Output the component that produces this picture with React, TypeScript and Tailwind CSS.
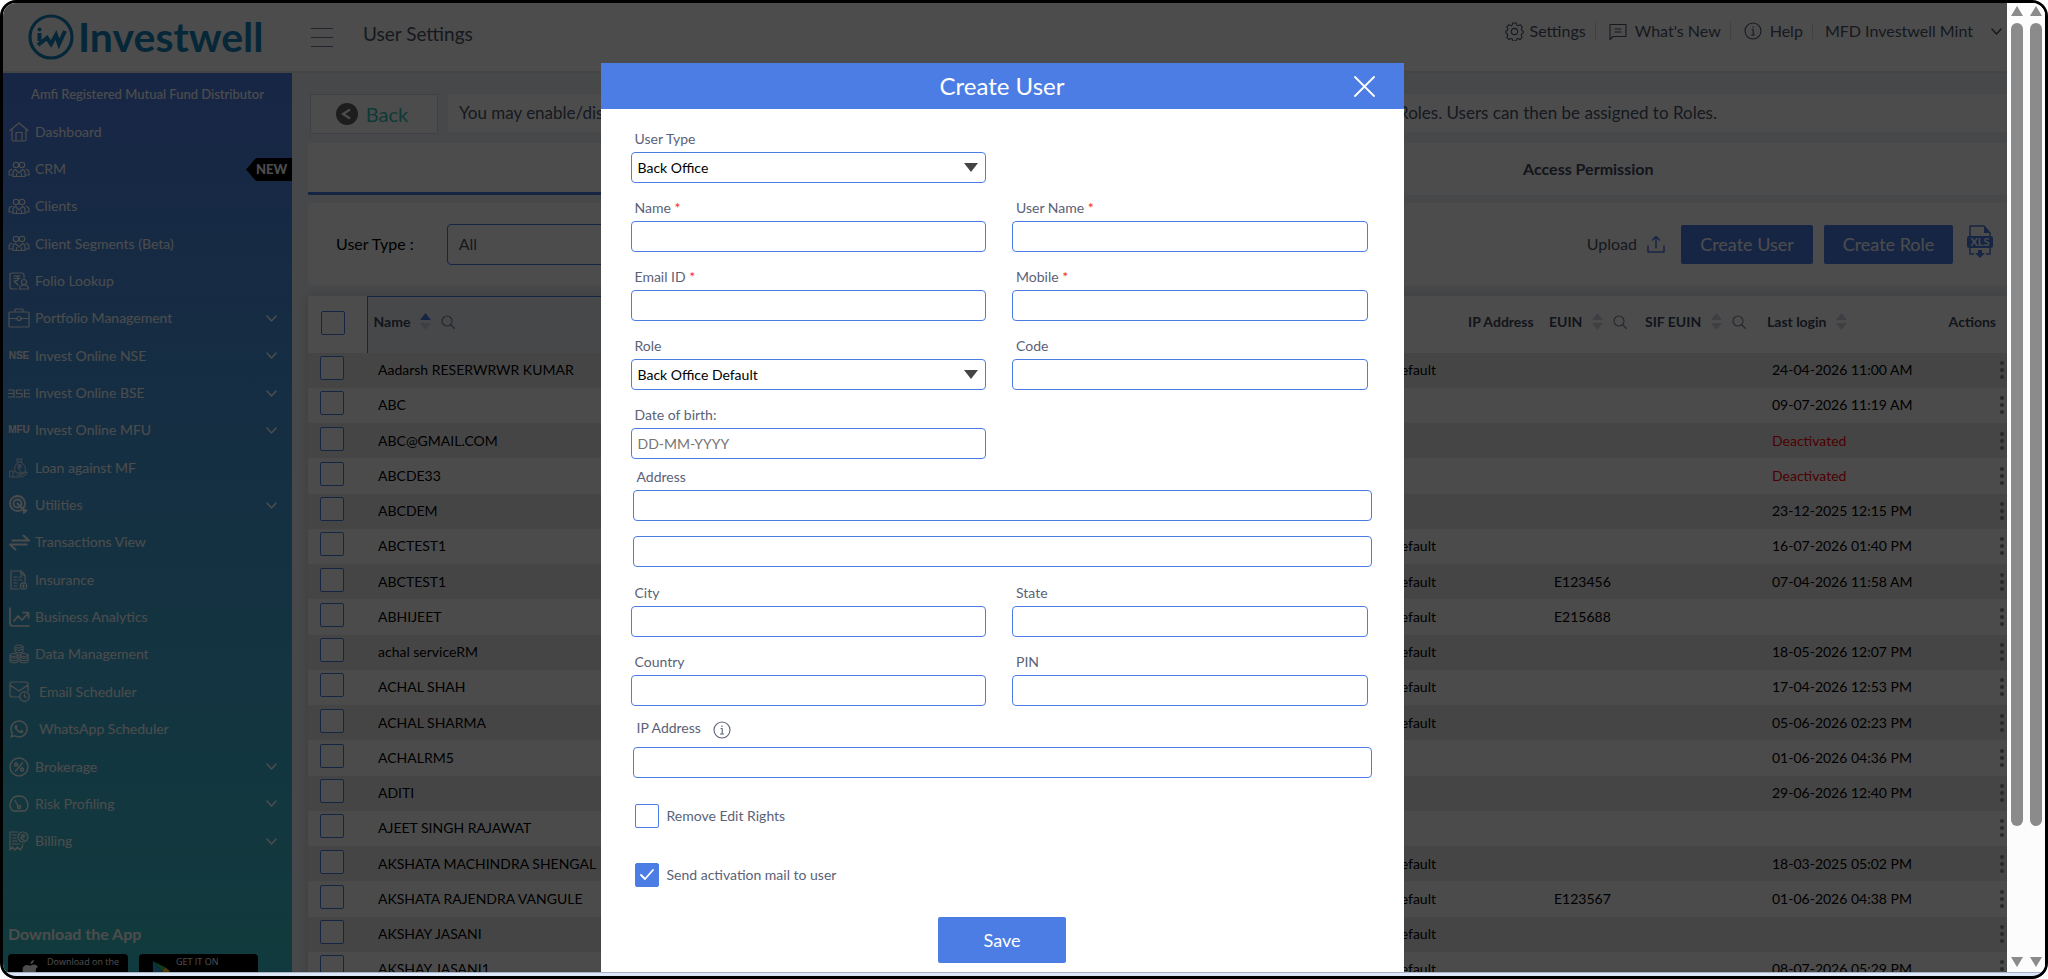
import { useState } from 'react';
import type { ReactNode } from 'react';
import { FaWhatsapp } from 'react-icons/fa';

type MenuItem = { label: string; icon: ReactNode; expandable?: boolean; isNew?: boolean; indent?: boolean };
type UserRow = { name: string; role?: string; euin?: string; login?: string };

const line = {
    fill: 'none',
    stroke: 'currentColor',
    strokeWidth: 1.2,
    strokeLinecap: 'round',
    strokeLinejoin: 'round',
} as const;

/* ---------- sidebar icons ---------- */

const HomeIcon = () => (
    <svg viewBox='0 0 20 20' className='w-5 h-5' {...line}>
        <path d='M1 8.500 10 1l9 7.500M3 7v10.500q0 1.500 1.500 1.500h11q1.500 0 1.500-1.500V7M7 19v-8.500h6V19' />
    </svg>
);

const PeopleIcon = () => (
    <svg viewBox='0 0 22 17' className='w-[22px] h-[17px]' {...line} strokeWidth={1.1}>
        <circle cx='8' cy='4' r='2.700' />
        <circle cx='14' cy='4' r='2.700' />
        <path d='M5 15.500V12q0-3 2.500-3.500L11 12l3.500-3.500Q17 9 17 12v3.500zM5 14H1v-2.500q0-2.500 3-3.200M17 14h4v-2.500q0-2.500-3-3.200M8.500 12.500v3M13.500 12.500v3' />
    </svg>
);

const FolioIcon = () => (
    <svg viewBox='0 0 20 18' className='w-5 h-[18px]' {...line}>
        <path d='M8 17H3q-2 0-2-2V3q0-2 2-2h10q2 0 2 2v3' />
        <path d='M5 4h6M5 6.500h6M5 4q4.500 0 4.500 2.500T5 9l4 4' />
        <circle cx='15' cy='10' r='2.500' />
        <path d='M10.500 17q0-4 4.500-4t4.500 4z' />
    </svg>
);

const BriefcaseIcon = () => (
    <svg viewBox='0 0 22 20' className='w-[22px] h-5' {...line}>
        <path d='M2 4h18q1 0 1 1v13q0 1-1 1H2q-1 0-1-1V5q0-1 1-1zM7 4V2q0-1 1-1h6q1 0 1 1v2M1 10.500h8M13 10.500h8' />
        <circle cx='11' cy='10.500' r='2' />
    </svg>
);

const WordIcon = ({ text }: { text: string }) => (
    <span className='text-[10px] leading-3 font-bold font-["Liberation_Sans",sans-serif]'>{text}</span>
);

const BseIcon = () => (
    <svg viewBox='0 0 22 9' className='w-[22px] h-[9px]' {...line}>
        <path d='M0 1h6v7H0M0 4.500h6M14 1H8.500v3.500H14V8H8M22 1h-5.500v7H22M16.500 4.500H22' />
    </svg>
);

const LoanIcon = () => (
    <svg viewBox='0 0 20 20' className='w-5 h-5 opacity-80' {...line} strokeWidth={1}>
        <path d='M8 1h5l-1 3H9zM9 4q-5 5-3 9M12 4q6 4 4 10-2 1-5 0M8.500 7h4M8.500 9h4M9 7q3 0 2.500 2T9 11l2.500 2M1 13h3v6H1zM4 14q3-1 5 1h3q1 1-1 2H8M12 17l5-3q2 0 1 1.500Q14 20 9 19H4' />
    </svg>
);

const UtilitiesIcon = () => (
    <svg viewBox='0 0 20 20' className='w-5 h-5' {...line} strokeWidth={1.8}>
        <circle cx='8.500' cy='8.500' r='7.500' />
        <circle cx='8.500' cy='8.500' r='4' />
        <path d='m8.500 8.500 8 8' />
        <path d='m13 13 6 2-4.500 4.500z' fill='currentColor' stroke='none' />
    </svg>
);

const TransferIcon = () => (
    <svg viewBox='0 0 21 17' className='w-[21px] h-[17px]' {...line} strokeWidth={2}>
        <path d='M3.500 6.500H20l-5.500-5M17.500 10.500H1l5.500 5' />
    </svg>
);

const InsuranceIcon = () => (
    <svg viewBox='0 0 18 20' className='w-[18px] h-5' {...line}>
        <path d='M9 19H1V1h10l4 4v7M11 1v4h4M4 7h3M9 7h3M4 10h3M9 10h3M4 13h3M4 16h3' />
        <circle cx='13.500' cy='16' r='3.200' />
        <path d='M13.500 14.500v3M12 16h3' />
    </svg>
);

const AnalyticsIcon = () => (
    <svg viewBox='0 0 21 20' className='w-[21px] h-5' {...line} strokeWidth={1.7}>
        <path d='M1 1v15q0 3 3 3h16M5 14l4-5 4 4 6-6.500M14 5.500h5.500V11' />
    </svg>
);

const DataIcon = () => (
    <svg viewBox='0 0 20 20' className='w-5 h-5' {...line} strokeWidth={1}>
        <path d='M6 3v5q4 2 8 0V3M6 5.500q4 2 8 0M1 11v7q4 2 8 0v-7M1 13.500q4 2 8 0M1 16q4 2 8 0M11 11v7q4 2 8 0v-7M11 13.500q4 2 8 0M11 16q4 2 8 0' />
        <ellipse cx='10' cy='2.500' rx='4' ry='1.500' />
        <ellipse cx='5' cy='11' rx='4' ry='1.500' />
        <ellipse cx='15' cy='11' rx='4' ry='1.500' />
    </svg>
);

const EmailIcon = () => (
    <svg viewBox='0 0 21 21' className='w-[21px] h-[21px]' {...line}>
        <path d='M10 16H3q-2 0-2-2V3q0-2 2-2h14q2 0 2 2v7M1 4l9 6 9-6' />
        <circle cx='15.500' cy='15.500' r='4.800' />
        <path d='M15.500 13v3h2' />
    </svg>
);

const PercentIcon = () => (
    <svg viewBox='0 0 20 20' className='w-5 h-5' {...line} strokeWidth={1.4}>
        <circle cx='10' cy='10' r='9' />
        <path d='m6.500 14 7-8' />
        <circle cx='7' cy='7.500' r='1.500' />
        <circle cx='13' cy='12.500' r='1.500' />
    </svg>
);

const GaugeIcon = () => (
    <svg viewBox='0 0 20 17' className='w-5 h-[17px]' {...line} strokeWidth={1.4}>
        <path d='M4 16q-3-2-3-6 1-9 9-9t9 9q0 4-3 6zM9 11 6 5.500' />
        <circle cx='10' cy='12' r='1.500' />
    </svg>
);

const BillingIcon = () => (
    <svg viewBox='0 0 20 20' className='w-5 h-5' {...line}>
        <path d='M9 1H1v18l2.500-3L6 19l2.500-3 2.500 3 2.500-3V13M3.500 4H7M3.500 7H7M3.500 10H8M3.500 13h7' />
        <circle cx='14' cy='6' r='5' />
        <path d='M12 4h4M12 6h4M12 4q3 0 3 1t-3 2l3 2.500' />
    </svg>
);

const ChevronDown = ({ className = 'w-[11px] h-[7px]' }: { className?: string }) => (
    <svg viewBox='0 0 11 7' className={className} {...line} strokeWidth={1.5}>
        <path d='m1 1 4.500 5L10 1' />
    </svg>
);

/* ---------- page icons ---------- */

const InfoIcon = () => (
    <svg viewBox='0 0 18 18' className='w-[18px] h-[18px]' {...line} strokeWidth={1.1}>
        <circle cx='9' cy='9' r='8' />
        <path d='M8 7.500h1.200V13M7.500 13h3M9 4.800v.6' />
    </svg>
);

const GearIcon = () => (
    <svg viewBox='0 0 20 20' className='w-[19px] h-[19px]' {...line} strokeWidth={1.1}>
        <path d='M8.200 1h3.600l.6 2.300 1.500.7 2.100-1.200 2.300 2.600-1.200 2 .6 1.600 1.500.5v2.200l-1.600.7-.6 1.500 1.100 2.100-2.300 2.500-2-1.100-1.500.6-.6 2H8.300l-.6-2-1.600-.6-2 1.100-2.300-2.500L3 13.900l-.6-1.500-1.500-.7V9.500l1.500-.5L3 7.400l-1.200-2L4.100 2.800 6.200 4l1.400-.7z' />
        <circle cx='10' cy='10' r='3.300' />
    </svg>
);

const NewsIcon = () => (
    <svg viewBox='0 0 18 18' className='w-[18px] h-[18px]' {...line} strokeWidth={1.1}>
        <path d='M1 2.500h16v12H4l-3 3zM6 7h6M6 10h6' />
    </svg>
);

const UploadIcon = () => (
    <svg viewBox='0 0 18 18' className='w-[18px] h-[18px] text-[#4c7de5]' {...line} strokeWidth={1.5}>
        <path d='M1 11v6h16v-6M9 13V1.500M5.500 5 9 1.500 12.500 5' />
    </svg>
);

const XlsIcon = () => (
    <svg viewBox='0 0 26 33' className='w-[26px] h-[33px] text-[#4c7de5]'>
        <path d='M3 12V1h14l6 7v4M3 22v7h4M23 22v7h-4' fill='none' stroke='currentColor' strokeWidth='1.5' />
        <path d='M17 1v7h6z' fill='currentColor' />
        <rect x='0' y='11' width='26' height='12' rx='2' fill='currentColor' />
        <path d='M11 25h4v3h3l-5 5-5-5h3z' fill='currentColor' />
        <text x='13' y='21' textAnchor='middle' fontSize='11' fontWeight='700' fill='#fff'>XLS</text>
    </svg>
);

const SearchIcon = () => (
    <svg viewBox='0 0 14 14' className='w-[14px] h-[14px] text-[#7b879b]' {...line}>
        <circle cx='6' cy='6' r='5' />
        <path d='m9.500 9.500 4 4' />
    </svg>
);

const SortIcon = ({ active = false }: { active?: boolean }) => (
    <svg viewBox='0 0 11 17' className='w-[11px] h-[17px]'>
        <path d='m5.500 0 5.500 7H0z' fill={active ? '#4c7de5' : '#ccd3e0'} />
        <path d='m5.500 17 5.500-7H0z' fill='#ccd3e0' />
    </svg>
);

const Logo = () => (
    <a href='#' className='flex items-center gap-1 pl-[25px] w-[289px] text-[#1583bd]'>
        <svg viewBox='0 0 46 46' className='w-[46px] h-[46px] shrink-0' fill='none' stroke='currentColor'>
            <circle cx='23' cy='23' r='21' strokeWidth='3.200' />
            <circle cx='11.500' cy='15.500' r='2' fill='currentColor' stroke='none' />
            <path d='M11.500 19v8' strokeWidth='4' />
            <path d='m10 31 9-7 4 6 5-9 3 9 6-13' strokeWidth='4' />
        </svg>
        <span className='text-[41px] leading-10 font-bold'>Investwell</span>
    </a>
);

const menu: MenuItem[] = [
    { label: 'Dashboard', icon: <HomeIcon /> },
    { label: 'CRM', icon: <PeopleIcon />, isNew: true },
    { label: 'Clients', icon: <PeopleIcon /> },
    { label: 'Client Segments (Beta)', icon: <PeopleIcon /> },
    { label: 'Folio Lookup', icon: <FolioIcon /> },
    { label: 'Portfolio Management', icon: <BriefcaseIcon />, expandable: true },
    { label: 'Invest Online NSE', icon: <WordIcon text='NSE' />, expandable: true },
    { label: 'Invest Online BSE', icon: <BseIcon />, expandable: true },
    { label: 'Invest Online MFU', icon: <WordIcon text='MFU' />, expandable: true },
    { label: 'Loan against MF', icon: <LoanIcon /> },
    { label: 'Utilities', icon: <UtilitiesIcon />, expandable: true },
    { label: 'Transactions View', icon: <TransferIcon /> },
    { label: 'Insurance', icon: <InsuranceIcon /> },
    { label: 'Business Analytics', icon: <AnalyticsIcon /> },
    { label: 'Data Management', icon: <DataIcon /> },
    { label: 'Email Scheduler', icon: <EmailIcon />, indent: true },
    { label: 'WhatsApp Scheduler', icon: <FaWhatsapp className='w-5 h-5' />, indent: true },
    { label: 'Brokerage', icon: <PercentIcon />, expandable: true },
    { label: 'Risk Profiling', icon: <GaugeIcon />, expandable: true },
    { label: 'Billing', icon: <BillingIcon />, expandable: true },
];

const users: UserRow[] = [
    { name: 'Aadarsh RESERWRWR KUMAR', role: 'Default', login: '24-04-2026 11:00 AM' },
    { name: 'ABC', login: '09-07-2026 11:19 AM' },
    { name: 'ABC@GMAIL.COM', login: 'Deactivated' },
    { name: 'ABCDE33', login: 'Deactivated' },
    { name: 'ABCDEM', login: '23-12-2025 12:15 PM' },
    { name: 'ABCTEST1', role: 'Default', login: '16-07-2026 01:40 PM' },
    { name: 'ABCTEST1', role: 'Default', euin: 'E123456', login: '07-04-2026 11:58 AM' },
    { name: 'ABHIJEET', role: 'Default', euin: 'E215688' },
    { name: 'achal serviceRM', role: 'Default', login: '18-05-2026 12:07 PM' },
    { name: 'ACHAL SHAH', role: 'Default', login: '17-04-2026 12:53 PM' },
    { name: 'ACHAL SHARMA', role: 'Default', login: '05-06-2026 02:23 PM' },
    { name: 'ACHALRM5', login: '01-06-2026 04:36 PM' },
    { name: 'ADITI', login: '29-06-2026 12:40 PM' },
    { name: 'AJEET SINGH RAJAWAT' },
    { name: 'AKSHATA MACHINDRA SHENGAL', role: 'Default', login: '18-03-2025 05:02 PM' },
    { name: 'AKSHATA RAJENDRA VANGULE', role: 'Default', euin: 'E123567', login: '01-06-2026 04:38 PM' },
    { name: 'AKSHAY JASANI', role: 'Default' },
    { name: 'AKSHAY JASANI1', role: 'Default', login: '08-07-2026 05:29 PM' },
];

const boxClass = 'block appearance-none w-6 h-6 rounded-[2px] border border-[#4c7de5] bg-white';

function Header() {
    return (
        <header className='flex items-center h-[70px] shrink-0 bg-white border-b-2 border-[#e2e7ef] text-[#4a5468]'>
            <Logo />
            <button aria-label='Toggle menu' className='ml-[19px] flex flex-col gap-2 w-[22px]'>
                <span className='h-px bg-[#6b7890]' />
                <span className='h-px bg-[#6b7890]' />
                <span className='h-px bg-[#6b7890]' />
            </button>
            <h1 className='ml-[30px] text-[19px] pb-[6px]'>User Settings</h1>
            <nav className='ml-auto pb-3 flex items-center text-base'>
                <a href='#' className='flex items-center gap-[6px] pr-[9px]'><GearIcon />Settings</a>
                <a href='#' className='flex items-center gap-2 border-l border-[#d5dae3] leading-4 pl-[13px] pr-[9px]'><NewsIcon />What's New</a>
                <a href='#' className='flex items-center gap-2 border-l border-[#d5dae3] leading-4 pl-[13px] pr-[9px]'><InfoIcon />Help</a>
                <button className='flex items-center gap-[18px] border-l border-[#d5dae3] leading-4 pl-3 pr-[5px]'>
                    MFD Investwell Mint<ChevronDown />
                </button>
            </nav>
        </header>
    );
}

function Sidebar() {
    return (
        <aside className='w-[289px] shrink-0 overflow-hidden bg-linear-to-b from-[#4f7fe8] to-[#38c4cc] text-white'>
            <p className='pt-[11px] pb-[9px] text-center text-[13px] leading-5 font-medium'>Amfi Registered Mutual Fund Distributor</p>
            <ul className='flex flex-col h-[747px]'>
                {menu.map((item) => (
                    <li key={item.label} className='flex-1 flex items-center'>
                        <a href='#' className='flex-1 flex items-center text-sm'>
                            <span className={`flex items-center justify-center w-[22px] ml-[5px] shrink-0 ${item.indent ? 'mr-[9px]' : 'mr-[5px]'}`}>{item.icon}</span>
                            {item.label}
                            {item.expandable && <span className='ml-auto pr-[15px]'><ChevronDown /></span>}
                            {item.isNew && (
                                <span className='ml-auto flex'>
                                    <svg viewBox='0 0 10 23' className='w-[10px] h-[23px]'><path d='M10 0v23L0 11.500z' /></svg>
                                    <span className='bg-black w-9 h-[23px] leading-[23px] text-[13px] font-black'>NEW</span>
                                </span>
                            )}
                        </a>
                    </li>
                ))}
            </ul>
            <h2 className='mt-[62px] pl-[5px] text-base leading-6 font-bold'>Download the App</h2>
            <div className='mt-2 pl-[5px] flex gap-[11px]'>
                <a href='#' className='flex items-start gap-2 w-[120px] h-9 bg-black rounded-[4px] pl-[14px] pt-[3px]'>
                    <svg viewBox='0 0 20 24' className='mt-[3px] w-[17px] h-5' fill='currentColor'>
                        <path d='M14 0q0 4-4 5 0-4 4-5zM10 7q2-1.500 4-1.500 3 0 5 2.500-5 3-1 9-2 6-5 6l-3-1-3 1q-3 0-5-5Q-1 10 2 7.500q3-2.500 8-.5z' />
                    </svg>
                    <span className='flex flex-col'>
                        <span className='text-[9px] leading-[10px] font-["Open_Sans",sans-serif]'>Download on the</span>
                        <span className='text-lg leading-[22px] font-medium'>App Store</span>
                    </span>
                </a>
                <a href='#' className='flex items-start gap-[6px] w-[119px] h-9 bg-black rounded-[4px] pl-[13px] pt-[3px]'>
                    <svg viewBox='0 0 20 24' className='mt-[3px] w-[18px] h-[22px] shrink-0'>
                        <path d='M1 1v22L11 12z' fill='#29a3e8' />
                        <path d='M1 1 15 8l-4 4z' fill='#2cc46b' />
                        <path d='m15 8 5 4-5 4-4-4z' fill='#f8c51c' />
                        <path d='m1 23 14-7-4-4z' fill='#ea4335' />
                    </svg>
                    <span className='flex flex-col'>
                        <span className='text-[9px] leading-[10px] font-["Open_Sans",sans-serif]'>GET IT ON</span>
                        <span className='text-base leading-[22px] font-medium whitespace-nowrap'>Google Play</span>
                    </span>
                </a>
            </div>
        </aside>
    );
}

function UsersTable() {
    return (
        <table className='mt-[11px] w-full h-[691px] table-fixed border-collapse bg-white text-sm text-left shadow-[0_0_12px_rgba(0,0,0,0.15)]'>
            <colgroup>
                <col className='w-[59px]' />
                <col />
                <col className='w-[400px]' />
                <col className='w-[81px]' />
                <col className='w-[96px]' />
                <col className='w-[122px]' />
                <col className='w-[140px]' />
                <col className='w-[106px]' />
            </colgroup>
            <thead>
                <tr className='h-14 text-[#3f485c] whitespace-nowrap'>
                    <th className='pl-[13px] pb-1'><input type='checkbox' aria-label='Select all users' className={boxClass} /></th>
                    <th className='pl-[6px] pb-[6px] bg-[#eef2f9] border-t border-l border-[#4c7de5]'>
                        <div className='flex items-center gap-[10px]'>Name<SortIcon active /><SearchIcon /></div>
                    </th>
                    <th />
                    <th className='pl-[6px] pb-[6px]'>IP Address</th>
                    <th className='pl-[6px] pb-[6px]'><div className='flex items-center gap-[10px]'>EUIN<SortIcon /><SearchIcon /></div></th>
                    <th className='pl-[6px] pb-[6px]'><div className='flex items-center gap-[10px]'>SIF EUIN<SortIcon /><SearchIcon /></div></th>
                    <th className='pl-[6px] pb-[6px]'><div className='flex items-center gap-[10px]'>Last login<SortIcon /></div></th>
                    <th className='pr-[11px] pb-[6px] text-right'>Actions</th>
                </tr>
            </thead>
            <tbody>
                {users.map((user, i) => (
                    <tr key={i} className='h-[35px] text-black odd:bg-[#e8e8e8] even:bg-[#fbfbfb]'>
                        <td className='pl-3 pb-1'><input type='checkbox' aria-label={user.name} className={boxClass} /></td>
                        <td className='pl-[11px]'>{user.name}</td>
                        <td className='pr-[26px] text-right'>{user.role}</td>
                        <td />
                        <td className='pl-[11px]'>{user.euin}</td>
                        <td />
                        <td className={`pl-[11px] whitespace-nowrap ${user.login === 'Deactivated' ? 'text-[#ff0000]' : ''}`}>{user.login}</td>
                        <td className='pr-[3px]'>
                            <button aria-label='Row actions' className='ml-auto flex flex-col gap-[3px]'>
                                <span className='w-1 h-1 rounded-full bg-[#8a8a8a]' />
                                <span className='w-1 h-1 rounded-full bg-[#8a8a8a]' />
                                <span className='w-1 h-1 rounded-full bg-[#8a8a8a]' />
                            </button>
                        </td>
                    </tr>
                ))}
            </tbody>
        </table>
    );
}

function UserSettings() {
    return (
        <main className='flex-1 min-w-0 overflow-hidden bg-[#edf2f8] pl-4 pt-[21px]'>
            <div className='flex gap-[10px]'>
                <button className='ml-[2px] flex items-center justify-center gap-2 w-[128px] h-10 bg-white border border-[#d3dae6] pr-1 text-xl text-[#35c3b8]'>
                    <svg viewBox='0 0 22 22' className='w-[22px] h-[22px]'>
                        <circle cx='11' cy='11' r='11' fill='#626262' />
                        <path d='m14 6.500-7 4.500 7 4.500' fill='none' stroke='#fff' strokeWidth='2.200' />
                    </svg>
                    Back
                </button>
                <p className='flex-1 flex justify-between h-[38px] leading-[38px] bg-white text-[17px] text-[#4a5468] pl-[11px] pr-[290px] overflow-hidden whitespace-nowrap'>
                    <span>You may enable/disable</span>
                    <span>Roles. Users can then be assigned to Roles.</span>
                </p>
            </div>
            <div className='mt-[9px] flex h-[52px] bg-white text-base font-bold text-[#3f485c]'>
                <button className='flex-1 border-b-[3px] border-[#4c7de5]'>Users</button>
                <button className='flex-1 pl-6'>Access Permission</button>
            </div>
            <div className='mt-2 flex items-center h-[82px] bg-white pl-7 pr-[14px] text-base'>
                <label htmlFor='filterType' className='text-black'>User Type :</label>
                <select id='filterType' className='ml-[33px] appearance-none w-[260px] h-[41px] rounded-[4px] border border-[#4c7de5] pl-[11px] text-[#4a5468]'>
                    <option>All</option>
                </select>
                <button className='ml-auto flex items-center gap-[10px] text-[#4a5468]'>Upload<UploadIcon /></button>
                <button className='ml-4 h-[39px] w-[132px] rounded-[2px] bg-[#4c7de5] text-white text-lg'>Create User</button>
                <button className='ml-[11px] h-[39px] w-[129px] rounded-[2px] bg-[#4c7de5] text-white text-lg'>Create Role</button>
                <button aria-label='Export as XLS' className='ml-[14px] pb-[6px]'><XlsIcon /></button>
            </div>
            <UsersTable />
        </main>
    );
}

const inputClass = 'block w-full h-[31px] px-[6px] bg-white border border-[#4c7de5] rounded-[4px] text-sm outline-none placeholder:text-[#757575]';
const labelClass = 'block pl-1 mb-[3px] text-sm leading-5 text-[#5a6278]';

function TextField({ id, label, required, placeholder }: { id: string; label: string; required?: boolean; placeholder?: string }) {
    return (
        <div>
            <label htmlFor={id} className={labelClass}>
                {label}
                {required && <span className='text-[#f5291b]'> *</span>}
            </label>
            <input id={id} type='text' placeholder={placeholder} className={inputClass} />
        </div>
    );
}

function SelectField({ id, label, options }: { id: string; label: string; options: string[] }) {
    return (
        <div>
            <label htmlFor={id} className={labelClass}>{label}</label>
            <div className='relative'>
                <select id={id} className={`${inputClass} appearance-none text-black`}>
                    {options.map((o) => <option key={o}>{o}</option>)}
                </select>
                <svg viewBox='0 0 14 9' className='absolute right-2 top-[11px] w-[14px] h-[9px] pointer-events-none'>
                    <path d='M0 0h14L7 9z' fill='#444' />
                </svg>
            </div>
        </div>
    );
}

function CreateUserModal() {
    const [removeRights, setRemoveRights] = useState(false);
    const [sendMail, setSendMail] = useState(true);

    return (
        <div role='dialog' aria-label='Create User' className='w-[803px] max-w-full min-h-full bg-white'>
            <div className='relative h-[46px] bg-[#4c7de5] text-white'>
                <h2 className='text-center text-2xl leading-[46px]'>Create User</h2>
                <button aria-label='Close' className='absolute right-[29px] top-[13px]'>
                    <svg viewBox='0 0 21 21' className='w-[21px] h-[21px]' {...line} strokeWidth={1.8}><path d='m1 1 19 19M20 1 1 20' /></svg>
                </button>
            </div>
            <form className='pt-5' onSubmit={(e) => e.preventDefault()}>
                <div className='pl-[30px] pr-9 grid grid-cols-2 gap-x-[26px] gap-y-[15px]'>
                    <SelectField id='userType' label='User Type' options={['Back Office']} />
                    <div />
                    <TextField id='name' label='Name' required />
                    <TextField id='userName' label='User Name' required />
                    <TextField id='email' label='Email ID' required />
                    <TextField id='mobile' label='Mobile' required />
                    <SelectField id='role' label='Role' options={['Back Office Default']} />
                    <TextField id='code' label='Code' />
                    <TextField id='dob' label='Date of birth:' placeholder='DD-MM-YYYY' />
                </div>
                <div className='pl-8 pr-8 mt-2'>
                    <TextField id='address' label='Address' />
                    <input type='text' aria-label='Address line 2' className={`${inputClass} mt-[15px]`} />
                </div>
                <div className='pl-[30px] pr-9 mt-4 grid grid-cols-2 gap-x-[26px] gap-y-[15px]'>
                    <TextField id='city' label='City' />
                    <TextField id='state' label='State' />
                    <TextField id='country' label='Country' />
                    <TextField id='pin' label='PIN' />
                </div>
                <div className='pl-8 pr-8 mt-3'>
                    <div className='flex items-start gap-3 mb-2 text-[#5a6278]'>
                        <label htmlFor='ip' className='pl-1 text-sm leading-5'>IP Address</label>
                        <span className='pt-[3px]'><InfoIcon /></span>
                    </div>
                    <input id='ip' type='text' className={inputClass} />
                </div>
                <label className='ml-[34px] mt-[26px] flex items-center gap-2 w-fit text-sm text-[#5a6278]'>
                    <input type='checkbox' checked={removeRights} onChange={(e) => setRemoveRights(e.target.checked)} className={`${boxClass} checked:bg-[#4c7de5]`} />
                    Remove Edit Rights
                </label>
                <label className='relative ml-[34px] mt-[35px] flex items-center gap-2 w-fit text-sm text-[#5a6278]'>
                    <input type='checkbox' checked={sendMail} onChange={(e) => setSendMail(e.target.checked)} className={`${boxClass} checked:bg-[#4c7de5]`} />
                    {sendMail && (
                        <svg viewBox='0 0 14 11' className='absolute left-[5px] top-[6px] w-[14px] h-[11px] text-white pointer-events-none' {...line} strokeWidth={1.8}>
                            <path d='m1 6 4 4 8-9' />
                        </svg>
                    )}
                    Send activation mail to user
                </label>
                <button type='submit' className='mx-auto mt-[30px] block w-[128px] h-[46px] rounded-[2px] bg-[#4c7de5] text-white text-lg'>Save</button>
            </form>
        </div>
    );
}

function ScrollRail() {
    return (
        <div aria-hidden='true' className='w-[19px] pt-[3px] pb-[5px] flex flex-col items-center bg-[#fcfcfc]'>
            <svg viewBox='0 0 12 10' className='w-3 h-[10px]'><path d='m6 0 6 10H0z' fill='#8b8b8b' /></svg>
            <div className='mt-[7px] flex-1 w-3 flex flex-col'>
                <div className='h-[86%] rounded-full bg-[#8b8b8b]' />
            </div>
            <svg viewBox='0 0 12 10' className='w-3 h-[10px]'><path d='M0 0h12L6 10z' fill='#8b8b8b' /></svg>
        </div>
    );
}

function App() {
    return (
        <div className='h-screen flex flex-col overflow-hidden bg-[#dbe6f7] border-[3px] border-black rounded-[16px] font-[Lato,sans-serif]'>
            <div className='flex-1 min-h-0 flex'>
                <div className='relative flex-1 min-w-0 flex flex-col overflow-hidden'>
                    <Header />
                    <div className='flex-1 min-h-0 flex'>
                        <Sidebar />
                        <UserSettings />
                    </div>
                    <div className='absolute inset-0 pt-[60px] pr-[6px] bg-black/70 flex justify-center overflow-hidden'>
                        <CreateUserModal />
                    </div>
                </div>
                <div className='flex bg-[#fcfcfc]'>
                    <ScrollRail />
                    <ScrollRail />
                </div>
            </div>
            <div className='h-1 shrink-0 border-t border-[#a9b2c4]' />
        </div>
    );
}

export default App;
